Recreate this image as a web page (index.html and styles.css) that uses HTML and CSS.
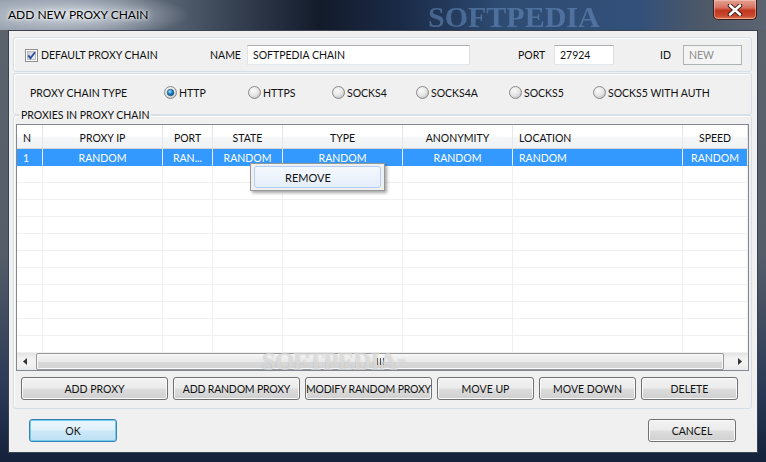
FILE: index.html
```html
<!DOCTYPE html>
<html lang="en">
<head>
  <meta charset="UTF-8" />
  <title>Add New Proxy Chain</title>
  <link rel="stylesheet" href="styles.css">
</head>
<body>

  <div class="window">
    <!-- Title bar -->
    <div class="titlebar">
      <span class="title">ADD NEW PROXY CHAIN</span>
      <span class="wm-title">SOFTPEDIA</span>
      <div class="close-btn">
        <svg width="16" height="12" viewBox="0 0 16 12">
          <path d="M3 1.5 L13 10.5 M13 1.5 L3 10.5" stroke="#3a1a14" stroke-width="4.4" stroke-linecap="round"/>
          <path d="M3 1.5 L13 10.5 M13 1.5 L3 10.5" stroke="#ffffff" stroke-width="2.6" stroke-linecap="round"/>
        </svg>
      </div>
    </div>

    <div class="client">
      <!-- Chain settings -->
      <div class="group group-main">
        <span class="chk-wrap">
          <svg class="checkbox" width="13" height="13" viewBox="0 0 13 13">
            <defs>
              <linearGradient id="chkfill" x1="0" y1="0" x2="1" y2="1">
                <stop offset="0" stop-color="#c9ccd1"/>
                <stop offset="1" stop-color="#f7f7f7"/>
              </linearGradient>
            </defs>
            <rect x="0.5" y="0.5" width="12" height="12" fill="#fff" stroke="#8e8f8f"/>
            <rect x="2.5" y="2.5" width="8" height="8" fill="url(#chkfill)" stroke="#b9bcc1"/>
            <path d="M3.3 6.4 L5.4 9.2 L10 3.2" fill="none" stroke="#2a4c9c" stroke-width="1.8"/>
          </svg>
          DEFAULT PROXY CHAIN
        </span>
        <span class="lbl lbl-name">NAME</span>
        <input class="field field-name" type="text" value="SOFTPEDIA CHAIN">
        <span class="lbl lbl-port">PORT</span>
        <input class="field field-port" type="text" value="27924">
        <span class="lbl lbl-id">ID</span>
        <input class="field field-id" type="text" value="NEW" disabled>
      </div>

      <!-- Chain type -->
      <div class="group group-type">
        <span class="type-label">PROXY CHAIN TYPE</span>
        <span class="radio r-http">
          <svg width="13" height="13" viewBox="0 0 13 13">
            <defs>
              <radialGradient id="roff" cx="0.4" cy="0.35" r="0.7">
                <stop offset="0" stop-color="#fafafa"/>
                <stop offset="0.6" stop-color="#e4e4e4"/>
                <stop offset="1" stop-color="#bdbdbd"/>
              </radialGradient>
              <radialGradient id="ron" cx="0.4" cy="0.35" r="0.7">
                <stop offset="0" stop-color="#9fe0fb"/>
                <stop offset="0.5" stop-color="#1f86c8"/>
                <stop offset="1" stop-color="#0c3f73"/>
              </radialGradient>
            </defs>
            <circle cx="6.5" cy="6.5" r="6" fill="url(#roff)" stroke="#8a8b8c"/>
            <circle cx="6.5" cy="6.5" r="3.3" fill="url(#ron)" stroke="#184d82" stroke-width="0.6"/>
          </svg>
          HTTP
        </span>
        <span class="radio r-https">
          <svg width="13" height="13" viewBox="0 0 13 13"><circle cx="6.5" cy="6.5" r="6" fill="url(#roff)" stroke="#8a8b8c"/></svg>
          HTTPS
        </span>
        <span class="radio r-socks4">
          <svg width="13" height="13" viewBox="0 0 13 13"><circle cx="6.5" cy="6.5" r="6" fill="url(#roff)" stroke="#8a8b8c"/></svg>
          SOCKS4
        </span>
        <span class="radio r-socks4a">
          <svg width="13" height="13" viewBox="0 0 13 13"><circle cx="6.5" cy="6.5" r="6" fill="url(#roff)" stroke="#8a8b8c"/></svg>
          SOCKS4A
        </span>
        <span class="radio r-socks5">
          <svg width="13" height="13" viewBox="0 0 13 13"><circle cx="6.5" cy="6.5" r="6" fill="url(#roff)" stroke="#8a8b8c"/></svg>
          SOCKS5
        </span>
        <span class="radio r-auth">
          <svg width="13" height="13" viewBox="0 0 13 13"><circle cx="6.5" cy="6.5" r="6" fill="url(#roff)" stroke="#8a8b8c"/></svg>
          SOCKS5 WITH AUTH
        </span>
      </div>

      <!-- Proxies list -->
      <div class="group group-list">
        <span class="legend">PROXIES IN PROXY CHAIN</span>
        <div class="listview">
          <div class="lv-row lv-header">
            <span class="left">N</span>
            <span>PROXY IP</span>
            <span>PORT</span>
            <span>STATE</span>
            <span>TYPE</span>
            <span>ANONYMITY</span>
            <span class="left">LOCATION</span>
            <span>SPEED</span>
          </div>
          <div class="lv-body" id="lv-body">
            <div class="lv-row selected">
              <span class="left">1</span>
              <span>RANDOM</span>
              <span>RAN...</span>
              <span>RANDOM</span>
              <span>RANDOM</span>
              <span>RANDOM</span>
              <span class="left">RANDOM</span>
              <span>RANDOM</span>
            </div>
          </div>
          <div class="hscroll">
            <span class="arrow">
              <svg width="5" height="7" viewBox="0 0 5 7"><path d="M4 0 L0 3.5 L4 7 Z" fill="#333"/></svg>
            </span>
            <span class="thumb">
              <svg width="7" height="7" viewBox="0 0 7 7"><path d="M0.5 0 V7 M3.5 0 V7 M6.5 0 V7" stroke="#4d4d4d"/></svg>
            </span>
            <span class="arrow">
              <svg width="5" height="7" viewBox="0 0 5 7"><path d="M1 0 L5 3.5 L1 7 Z" fill="#333"/></svg>
            </span>
          </div>
        </div>
        <div class="btn-row">
          <button class="btn w-add">ADD PROXY</button>
          <button class="btn w-random">ADD RANDOM PROXY</button>
          <button class="btn w-random">MODIFY RANDOM PROXY</button>
          <button class="btn w-move">MOVE UP</button>
          <button class="btn w-move">MOVE DOWN</button>
          <button class="btn w-move">DELETE</button>
        </div>
      </div>

      <div class="dlg-buttons">
        <button class="btn btn-ok">OK</button>
        <button class="btn btn-cancel">CANCEL</button>
      </div>
    </div>

    <!-- Context menu over the list -->
    <div class="ctx-menu">
      <div class="ctx-item">REMOVE</div>
    </div>

    <div class="wm-center">SOFTPEDIA<sup>™</sup></div>
  </div>

  <script>
    // empty grid rows under the selected one
    const body = document.getElementById('lv-body');
    for (let i = 0; i < 11; i++) {
      const row = document.createElement('div');
      row.className = 'lv-row';
      row.innerHTML = '<span></span>'.repeat(8);
      body.appendChild(row);
    }
  </script>
</body>
</html>
```

FILE: styles.css
```css
* { box-sizing: border-box; }
body { margin: 0; font-family: Lato, "Liberation Sans", sans-serif; font-size: 10.5px; color: #111; }

.window {
  position: relative; width: 766px; height: 462px; overflow: hidden;
  background: linear-gradient(180deg, #5c636d 0%, #555d69 55%, #2a3855 85%, #15213a 100%);
}

/* title bar */
.titlebar {
  position: relative; height: 30px;
  background:
    radial-gradient(ellipse 120px 24px at 70px 15px, rgba(215,222,230,0.9), rgba(215,222,230,0) 100%),
    linear-gradient(90deg, #8e98a5 0, #6f7a89 120px, #384354 230px, #131b2b 320px, #1a2a46 400px, #2e4b72 500px, #33507a 640px, #4c5868 700px, #5c6471 766px);
}
.title {
  position: absolute; left: 8px; top: 7px;
  font-size: 12px; color: #000;
  text-shadow: 0 0 6px #fff, 0 0 3px #fff;
}
.wm-title {
  position: absolute; left: 428px; top: 0;
  font-family: "Liberation Serif", serif; font-weight: bold; font-size: 30px; line-height: 34px; letter-spacing: 0;
  color: rgba(110,150,200,0.5); filter: blur(0.6px);
}
.close-btn {
  position: absolute; left: 713px; top: 0; width: 44px; height: 20px;
  display: flex; align-items: center; justify-content: center;
  border: 1px solid #3b1f1c; border-top: none; border-radius: 0 0 5px 5px;
  background: linear-gradient(180deg, #e4a294 0%, #d77360 40%, #c1371f 55%, #c94a2e 85%, #e0845f 100%);
  box-shadow: inset 0 0 0 1px rgba(255,210,200,0.45);
}

/* client area */
.client {
  margin: 0 8px; height: 423px;
  border: 1px solid #3a4250;
  background: #f0f0f0;
  padding: 6px 5px 0 4px;
}
.group {
  border: 1px solid #d5dfe5; border-radius: 3px;
  box-shadow: inset 1px 1px 0 #fff;
}
.group-main {
  display: flex; align-items: center;
  height: 35px; padding: 1px 0 0 11px;
}
.chk-wrap { width: 185px; display: flex; align-items: center; gap: 3px; }
.checkbox { flex: none; }
.lbl-name { width: 37px; }
.lbl-port { width: 36px; margin-left: 48px; }
.lbl-id { width: 23px; margin-left: 46px; }
.field {
  height: 20px; padding: 0 0 0 5px;
  font: inherit; color: #111;
  border: 1px solid; border-color: #abadb3 #dbdfe6 #e3e9ef #e2e3ea;
  background: #fff;
}
.field-name { width: 223px; }
.field-port { width: 60px; }
.field-id { width: 59px; background: #f4f4f4; border-color: #adb2b5; color: #8d8d8d; }

.group-type {
  display: flex; align-items: center;
  height: 42px; margin-top: 1px; padding: 0 0 3px 16px;
}
.type-label { width: 134px; }
.radio { display: flex; align-items: center; gap: 2px; width: 84px; }
.radio svg { flex: none; }
.r-socks4a { width: 93px; }
.r-auth { width: auto; }

.group-list { height: 294px; padding: 0 0 8px 0; }
.legend {
  display: block; width: fit-content;
  margin: -7px 0 0 5px; padding: 0 2px;
  line-height: 13px; background: #f0f0f0;
}

/* list view */
.listview {
  width: 733px; height: 247px; margin: 2px 0 0 2px;
  border: 1px solid #828790; background: #fff;
}
.lv-row {
  display: grid; height: 17px;
  grid-template-columns: 26px 120px 50px 70px 120px 110px 170px 65px;
}
.lv-row span {
  display: flex; align-items: center; justify-content: center;
  border-right: 1px solid #f0f0f0; border-bottom: 1px solid #f0f0f0;
  white-space: nowrap; overflow: hidden; padding-top: 1px;
}
.lv-row span.left { justify-content: flex-start; padding-left: 6px; }
.lv-header { height: 24px; background: linear-gradient(180deg, #ffffff 0%, #ffffff 45%, #f4f5f7 55%, #f1f2f4 100%); }
.lv-header span { border-right-color: #e3e6ea; border-bottom-color: #d5d5d5; padding-top: 2px; }
.lv-row.selected { background: #3399ff; color: #fff; }
.lv-row.selected span { border-bottom-color: #3399ff; border-right-color: #e8f0fa; }
.lv-body { height: 204px; overflow: hidden; }

.hscroll {
  display: flex; height: 17px;
  background: linear-gradient(180deg, #e3e3e3 0%, #f2f2f2 30%, #f2f2f2 70%, #e8e8e8 100%);
}
.hscroll .arrow { width: 17px; display: flex; align-items: center; justify-content: center; }
.hscroll .thumb {
  flex: 1; margin: 0 7px 0 2px;
  display: flex; align-items: center; justify-content: center;
  border: 1px solid #979797; border-radius: 2px;
  background: linear-gradient(180deg, #f5f5f5 0%, #e9e9e9 50%, #d9d9d9 51%, #d2d2d2 100%);
  box-shadow: inset 0 0 0 1px #f8f8f8;
}

/* buttons */
.btn {
  height: 23px; padding: 0;
  font: inherit; color: #111; white-space: nowrap;
  border: 1px solid #707070; border-radius: 3px;
  background: linear-gradient(180deg, #f2f2f2 0%, #ebebeb 48%, #dddddd 52%, #cfcfcf 100%);
  box-shadow: inset 0 0 0 1px #fbfbfb;
}
.btn-row { display: flex; gap: 5px; margin: 6px 0 0 7px; }
.w-add { width: 147px; }
.w-random { width: 127px; letter-spacing: -0.2px; }
.w-move { width: 97px; }

.dlg-buttons { display: flex; justify-content: space-between; margin: 10px 16px 0 16px; }
.dlg-buttons .btn { width: 88px; }
.btn-ok {
  border-color: #3c7fb1;
  background: linear-gradient(180deg, #ebf6fc 0%, #dff1fb 48%, #cbe8f8 52%, #bfe1f4 100%);
  box-shadow: inset 0 0 0 1px #6fcdf5;
}

/* context menu */
.ctx-menu {
  position: absolute; left: 250px; top: 163px; width: 135px; height: 28px;
  padding: 2px 3px;
  border: 1px solid #979797; background: #f0f0f0;
  box-shadow: 2px 2px 3px rgba(0,0,0,0.35);
}
.ctx-item {
  height: 22px; padding-left: 30px;
  display: flex; align-items: center;
  border: 1px solid #aecff7; border-radius: 3px;
  background: linear-gradient(180deg, #f4f8fd 0%, #e6eefa 100%);
  font-size: 11px;
}

/* watermark over the scrollbar */
.wm-center {
  position: absolute; left: 262px; top: 351px;
  font-family: "Liberation Serif", serif; font-weight: bold; font-size: 25px; line-height: 22px; letter-spacing: -1px;
  color: rgba(255,255,255,0.55);
  text-shadow: 0 0 1px rgba(120,120,120,0.5);
}
.wm-center sup { font-size: 7px; vertical-align: top; margin-left: 2px; }
```
